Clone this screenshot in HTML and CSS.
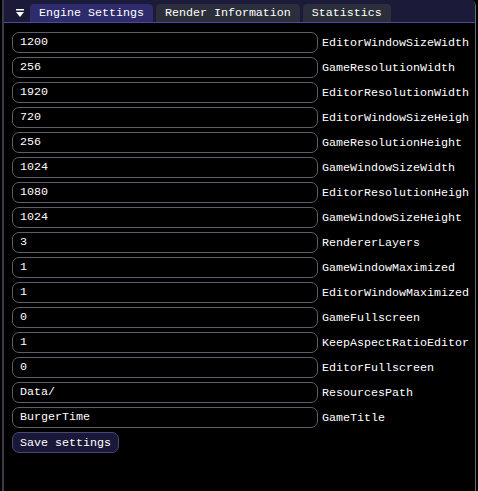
FILE: index.html
```html
<!DOCTYPE html>
<html lang="en">
<head>
    <meta charset="UTF-8">
    <title>Engine Settings</title>
    <link rel="stylesheet" href="styles.css">
</head>
<body>
    <div class="window">
        <div class="tab-bar">
            <div class="tab-list-button">
                <svg width="8" height="8" viewBox="0 0 8 8">
                    <rect x="0" y="0" width="8" height="1.5" fill="#ffffff"/>
                    <polygon points="0,3 8,3 4,8" fill="#ffffff"/>
                </svg>
            </div>
            <div class="tab active">Engine Settings</div>
            <div class="tab">Render Information</div>
            <div class="tab">Statistics</div>
        </div>
        <div class="content">
            <div class="field"><div class="input">1200</div><span class="label">EditorWindowSizeWidth</span></div>
            <div class="field"><div class="input">256</div><span class="label">GameResolutionWidth</span></div>
            <div class="field"><div class="input">1920</div><span class="label">EditorResolutionWidth</span></div>
            <div class="field"><div class="input">720</div><span class="label">EditorWindowSizeHeight</span></div>
            <div class="field"><div class="input">256</div><span class="label">GameResolutionHeight</span></div>
            <div class="field"><div class="input">1024</div><span class="label">GameWindowSizeWidth</span></div>
            <div class="field"><div class="input">1080</div><span class="label">EditorResolutionHeight</span></div>
            <div class="field"><div class="input">1024</div><span class="label">GameWindowSizeHeight</span></div>
            <div class="field"><div class="input">3</div><span class="label">RendererLayers</span></div>
            <div class="field"><div class="input">1</div><span class="label">GameWindowMaximized</span></div>
            <div class="field"><div class="input">1</div><span class="label">EditorWindowMaximized</span></div>
            <div class="field"><div class="input">0</div><span class="label">GameFullscreen</span></div>
            <div class="field"><div class="input">1</div><span class="label">KeepAspectRatioEditor</span></div>
            <div class="field"><div class="input">0</div><span class="label">EditorFullscreen</span></div>
            <div class="field"><div class="input">Data/</div><span class="label">ResourcesPath</span></div>
            <div class="field"><div class="input">BurgerTime</div><span class="label">GameTitle</span></div>
            <button class="save-button">Save settings</button>
        </div>
    </div>
</body>
</html>
```

FILE: styles.css
```css
* {
    margin: 0;
    padding: 0;
    box-sizing: border-box;
}

body {
    background: #000000;
    font-family: 'Liberation Mono', 'DejaVu Sans Mono', monospace;
    font-size: 11.67px;
    color: #ffffff;
    width: 478px;
    height: 491px;
    overflow: hidden;
}

.window {
    margin-left: 2px;
    width: 474px;
    height: 491px;
    border-left: 2px solid #3a3a48;
    border-right: 1px solid #6a6a74;
    border-top-right-radius: 6px;
    overflow: hidden;
    background: #000000;
}

.tab-bar {
    height: 23px;
    background: #1b1a38;
    border-bottom: 1px solid #4c4a9c;
    display: flex;
    align-items: flex-end;
    padding-left: 8px;
    gap: 3px;
}

.tab-list-button {
    width: 15px;
    height: 19px;
    display: flex;
    justify-content: center;
    align-items: center;
}

.tab {
    height: 18px;
    line-height: 18px;
    padding: 0 9px;
    background: #2b2f3b;
    border-radius: 4px 4px 0 0;
    white-space: nowrap;
}

.tab.active {
    background: #2e2c6c;
}

.content {
    padding: 9px 0 0 8px;
    display: flex;
    flex-direction: column;
    gap: 4px;
    align-items: flex-start;
}

.field {
    display: flex;
    align-items: center;
    height: 21px;
    width: 458px;
    overflow: hidden;
}

.input {
    flex: none;
    width: 306px;
    height: 21px;
    line-height: 19px;
    border: 1px solid #5e5e68;
    border-radius: 7px;
    padding-left: 7px;
    background: #000000;
}

.label {
    margin-left: 4px;
    white-space: nowrap;
}

.save-button {
    font-family: inherit;
    font-size: inherit;
    color: #ffffff;
    height: 21px;
    padding: 0 7px;
    background: #1a1838;
    border: 1px solid #4a4870;
    border-radius: 7px;
}
```
